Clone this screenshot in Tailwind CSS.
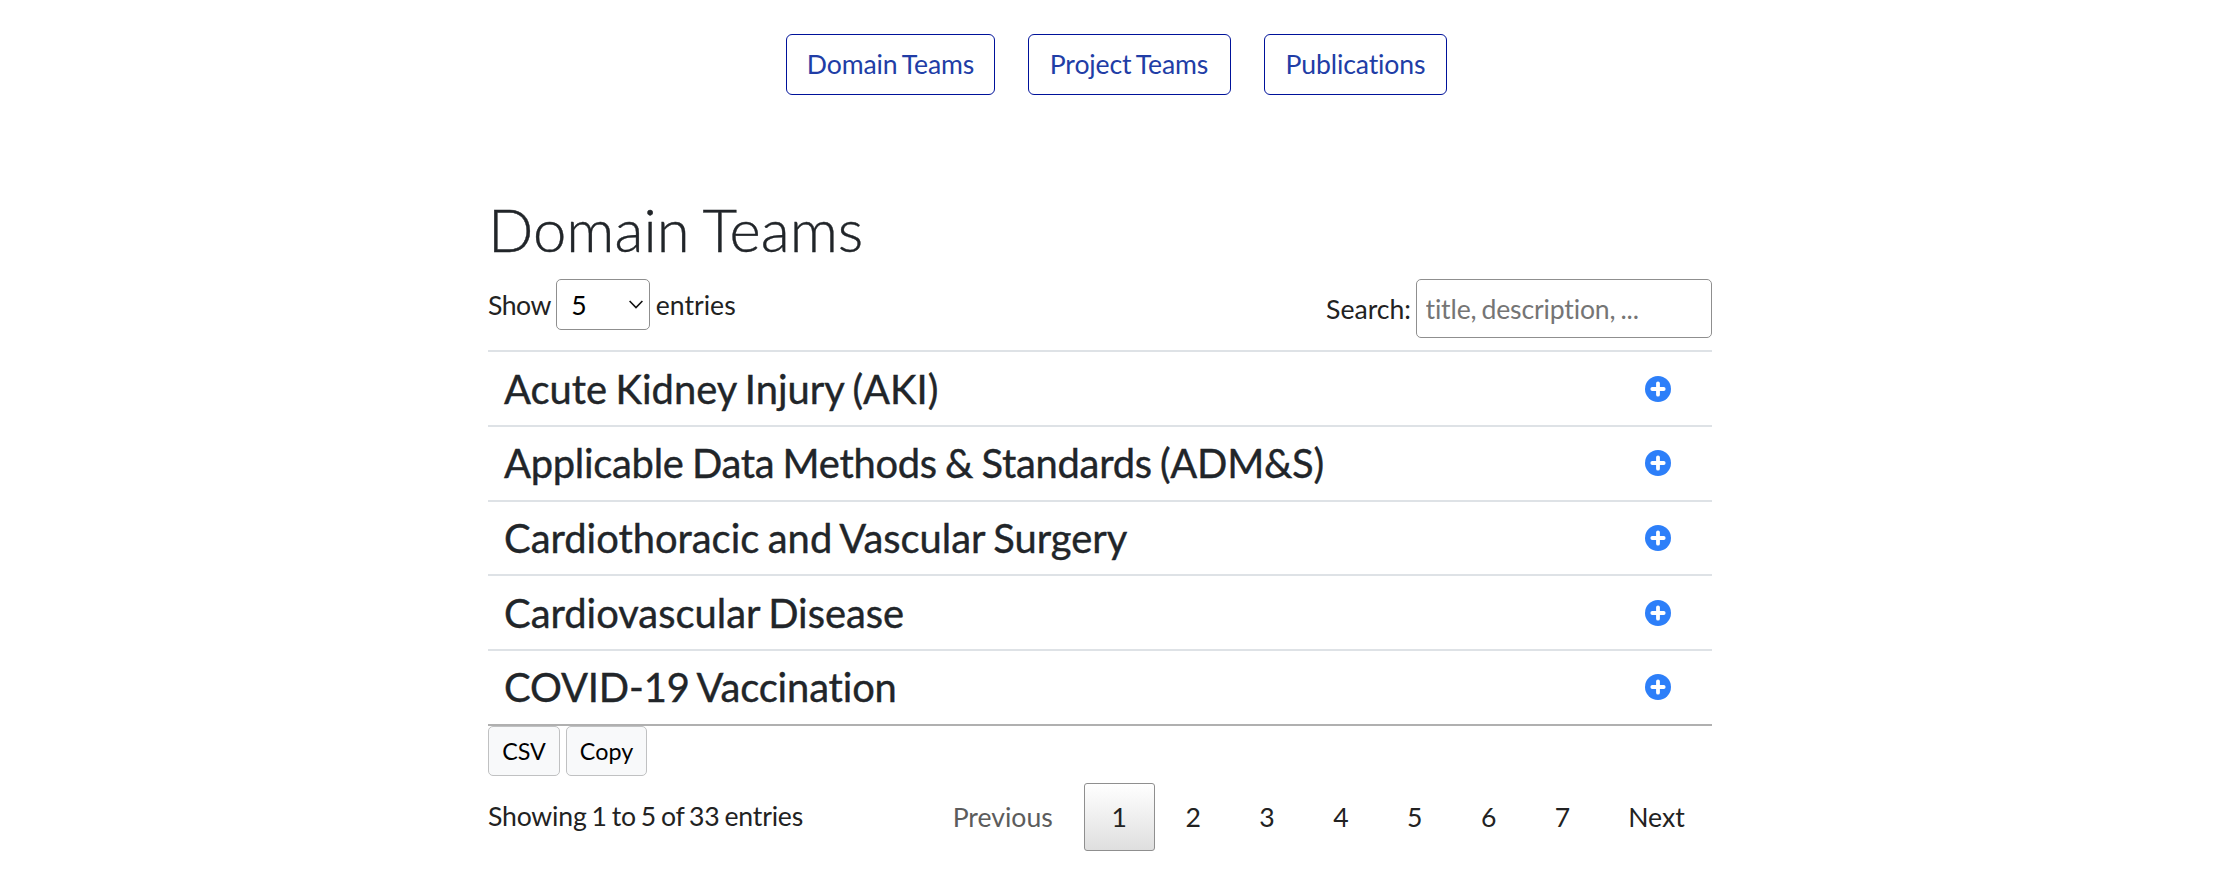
<!DOCTYPE html>
<html lang="en">
<head>
<meta charset="utf-8">
<title>Domain Teams</title>
<script src="https://cdn.jsdelivr.net/npm/@tailwindcss/browser@4"></script>
</head>
<body class="bg-white font-['Lato',sans-serif] text-[26.6px] leading-10 text-[#212529] [font-variant-ligatures:none] [word-spacing:-0.063em]">
<svg class="hidden"><symbol id="plus" viewBox="0 0 26 26"><circle cx="13" cy="13" r="13" fill="#2d7ff9"/><path d="M13 7.3v11.4M7.3 13h11.4" stroke="#fff" stroke-width="3.8" stroke-linecap="round"/></symbol></svg>
<nav class="ml-[786px] flex gap-[33px] pt-[34px] tracking-[-0.12px] text-[#213da6]">
  <a class="flex h-[61px] w-[209px] items-center justify-center rounded-[6px] border border-[#00129a] pb-px">Domain Teams</a>
  <a class="flex h-[61px] w-[203px] items-center justify-center rounded-[6px] border border-[#00129a] pb-px pr-px">Project Teams</a>
  <a class="flex h-[61px] w-[183px] items-center justify-center rounded-[6px] border border-[#00129a] pb-px">Publications</a>
</nav>
<main class="ml-[488px] w-[1224px] pt-[98px]">
  <h2 class="h-[86.4px] text-[59.8px] font-light leading-[72px] [-webkit-text-stroke:0.4px_#212529]">Domain Teams</h2>
  <div class="flex h-[71px] items-start justify-between text-[#222]">
    <label class="flex h-[51px] items-center gap-[5.5px]"><span class="tracking-[-0.5px]">Show</span>
      <span class="flex h-[51px] w-[94px] items-center justify-between rounded-[5px] border border-[#8f8f8f] pl-[14px] pr-[6px] text-black">5
        <svg class="h-[9px] w-[14px]" viewBox="0 0 14 9" fill="none" stroke="#111" stroke-width="1.6"><path d="M.6 1 7 7.6 13.4 1"/></svg>
      </span>entries</label>
    <label class="flex items-center gap-[5px]">Search:
      <input class="h-[59px] w-[296px] rounded-[5px] border border-[#8f8f8f] px-[8.5px] tracking-[-0.15px] [word-spacing:-0.063em] placeholder:text-[#757575]" placeholder="title, description, ...">
    </label>
  </div>
  <ul class="border-b-2 border-[#b0b0b0] text-[39.9px] leading-[48px] [-webkit-text-stroke:0.4px_#212529]">
    <li class="flex h-[74.7px] items-center justify-between border-t-2 border-[#dee2e6] pl-4 pr-[41px]">Acute Kidney Injury (AKI)<svg class="size-[26px]"><use href="#plus"/></svg></li>
    <li class="flex h-[74.7px] items-center justify-between border-t-2 border-[#dee2e6] pl-4 pr-[41px]"><span class="tracking-[-0.27px]">Applicable Data Methods &amp; Standards (ADM&amp;S)</span><svg class="size-[26px]"><use href="#plus"/></svg></li>
    <li class="flex h-[74.7px] items-center justify-between border-t-2 border-[#dee2e6] pl-4 pr-[41px]">Cardiothoracic and Vascular Surgery<svg class="size-[26px]"><use href="#plus"/></svg></li>
    <li class="flex h-[74.7px] items-center justify-between border-t-2 border-[#dee2e6] pl-4 pr-[41px]">Cardiovascular Disease<svg class="size-[26px]"><use href="#plus"/></svg></li>
    <li class="flex h-[74.7px] items-center justify-between border-t-2 border-[#dee2e6] pl-4 pr-[41px]"><span class="tracking-[-0.15px]">COVID-19 Vaccination</span><svg class="size-[26px]"><use href="#plus"/></svg></li>
  </ul>
  <div class="flex gap-[6px] text-[23.3px] text-black">
    <button class="h-[50px] w-[72px] rounded-[5px] border border-[#c0c1c2] bg-[#f8f9fa]">CSV</button>
    <button class="h-[50px] w-[81px] rounded-[5px] border border-[#c0c1c2] bg-[#f8f9fa]">Copy</button>
  </div>
  <div class="flex items-start justify-between pt-[7px] text-[#222]">
    <div class="pt-[13px] tracking-[-0.19px]">Showing 1 to 5 of 33 entries</div>
    <div class="flex h-[68px] items-center gap-[3.2px]">
      <span class="flex w-[156px] justify-center text-[#5c5c5c]">Previous</span>
      <span class="flex h-[68px] w-[70.7px] items-center justify-center rounded-[3px] border border-[#8f8f8f] bg-linear-to-b from-white to-[#dfdfdf]">1</span>
      <span class="w-[70.7px] text-center">2</span>
      <span class="w-[70.7px] text-center">3</span>
      <span class="w-[70.7px] text-center">4</span>
      <span class="w-[70.7px] text-center">5</span>
      <span class="w-[70.7px] text-center">6</span>
      <span class="w-[70.7px] text-center">7</span>
      <span class="w-[111px] text-center">Next</span>
    </div>
  </div>
</main>
</body>
</html>
